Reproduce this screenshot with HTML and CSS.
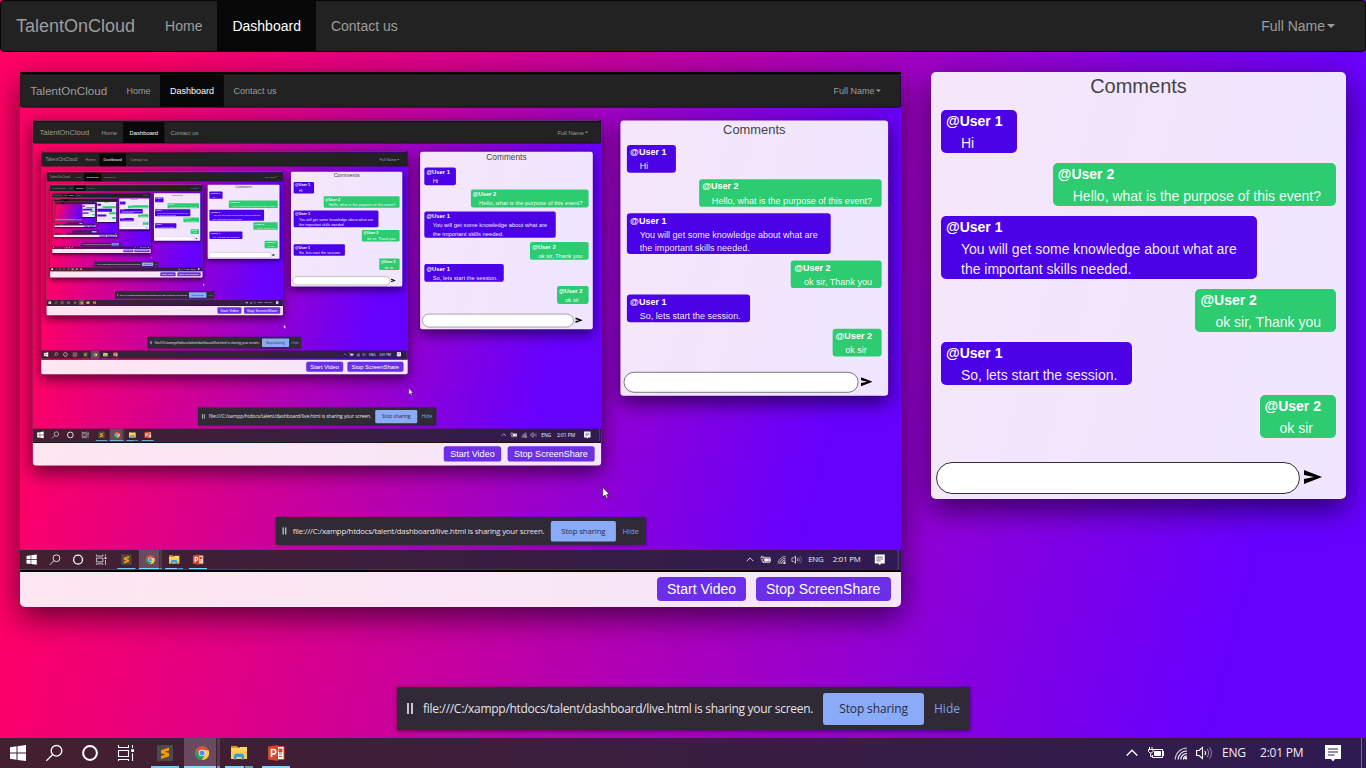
FILE: index.html
```html
<!DOCTYPE html>
<html lang="en">
<head>
<meta charset="utf-8">
<title>TalentOnCloud</title>
<link rel="stylesheet" href="styles.css">
</head>
<body>
<div id="root"></div>

<template id="desktop">
  <div class="desktop">
    <div class="page">
      <nav class="navbar">
        <a class="brand">TalentOnCloud</a>
        <a class="nav-item">Home</a>
        <a class="nav-item active">Dashboard</a>
        <a class="nav-item">Contact us</a>
        <a class="nav-item user">Full Name<span class="caret"></span></a>
      </nav>
      <main class="content">
        <section class="card stage">
          <div class="video"><div class="screen"></div></div>
          <div class="controls">
            <button class="btn">Start Video</button>
            <button class="btn stop">Stop ScreenShare</button>
          </div>
        </section>
        <section class="card chat">
          <h2 class="chat-title">Comments</h2>
          <div class="messages">
            <div class="msg one"><b>@User 1</b><p>Hi</p></div>
            <div class="msg two"><b>@User 2</b><p>Hello, what is the purpose of this event?</p></div>
            <div class="msg one"><b>@User 1</b><p>You will get some knowledge about what are the important skills needed.</p></div>
            <div class="msg two"><b>@User 2</b><p>ok sir, Thank you</p></div>
            <div class="msg one"><b>@User 1</b><p>So, lets start the session.</p></div>
            <div class="msg two"><b>@User 2</b><p>ok sir</p></div>
          </div>
          <div class="composer">
            <div class="field"></div>
            <svg class="send" width="18" height="14" viewBox="0 0 18 14"><path d="M0 0L18 7L0 14V9L10 7L0 5Z" fill="#000"/></svg>
          </div>
        </section>
      </main>
    </div>
    <div class="share">
      <span class="pause"></span>
      <span class="share-text">file:///C:/xampp/htdocs/talent/dashboard/live.html is sharing your screen.</span>
      <span class="share-stop">Stop sharing</span>
      <span class="share-hide">Hide</span>
    </div>
    <svg class="cursor" width="12" height="19" viewBox="0 0 12 19"><path d="M.5 .8V16.2L4.1 12.8L6.6 18.2L9 17.1L6.600 11.900H11.300Z" fill="#fff" stroke="#000"/></svg>
    <footer class="taskbar">
      <svg width="36" height="30"><path d="M10 9.300L16.500 8.300V14.500H10ZM17.500 8.200L26 7V14.500H17.500ZM10 15.500H16.500V21.700L10 20.800ZM17.500 15.500H26V23L17.500 21.900Z" fill="#fff"/></svg>
      <svg width="36" height="30" fill="none" stroke="#fff" stroke-width="1.300"><circle cx="20.500" cy="12.800" r="5.300"/><path d="M16.700 16.500L10.300 22.900"/></svg>
      <svg width="36" height="30"><circle cx="18" cy="15" r="6.900" fill="none" stroke="#fff" stroke-width="2"/></svg>
      <svg width="36" height="30" fill="none" stroke="#fff" stroke-width="1.100"><path d="M10.500 7V9.500H20.500V7M10.500 12.500H20.500V18.500H10.500ZM10.500 23V21.500H20.500V23M24.500 7V10M24.500 15.500V23"/><path d="M23.200 11.200H26V14H23.200Z" fill="#fff" stroke="none"/></svg>
      <svg class="first-app" width="37" height="30"><path d="M4 28H32V30H4Z" fill="#76c8f5"/><rect x="10" y="7" width="16" height="16" rx="1" fill="#4b4b4b"/><path d="M22 9.500L14 12.200V15.300L18.500 16.600L14 18V21L22 18.200V15L17.500 13.700L22 12.400Z" fill="#ff9800"/></svg>
      <svg width="37" height="30"><path d="M0 0H32V30H0Z" fill="#6b4a60"/><path d="M33 0H36V30H33Z" fill="#563a4c"/><path d="M0 28H32V30H0Z" fill="#85d5ff"/><path d="M33 28H36V30H33Z" fill="#5f9fc2"/>
        <circle cx="18" cy="15" r="7" fill="#dd5144"/><path d="M11.900 11.500A7 7 0 0 0 18 22L21 16.800L18 15L15 16.800Z" fill="#1da462"/><path d="M24.600 12.300A7 7 0 0 1 18 22L21.100 16.700L20.500 12.300Z" fill="#ffcd46"/><circle cx="18" cy="15" r="3.300" fill="#fff"/><circle cx="18" cy="15" r="2.600" fill="#4c8bf5"/></svg>
      <svg width="37" height="30"><path d="M4 28H23V30H4Z" fill="#85d5ff"/><path d="M24 28H32V30H24Z" fill="#5f9fc2"/><path d="M10 8H16L18 10H10Z" fill="#d99a10"/><path d="M10 10H18L19 9H26V21H10Z" fill="#ffd766"/><path d="M10 10.500V21H26V13Z" fill="#f8c93c" opacity=".5"/><path d="M12.800 21.500V17.500L14.500 15.500H21.500L23.200 17.500V21.500H20.500V19H15.500V21.500Z" fill="#3b9be0"/></svg>
      <svg width="37" height="30"><path d="M4 28H32V30H4Z" fill="#85d5ff"/><path d="M19 8.500H26V21.500H19Z" fill="#fff" stroke="#d24726" stroke-width="1"/><path d="M10 8.500L20 7V23L10 21.500Z" fill="#d24726"/><path d="M13.500 19V11.500H15.500A2.200 2.200 0 0 1 15.500 16H13.500" fill="none" stroke="#fff" stroke-width="1.700"/><path d="M21 11H24V14H21ZM21 16H24M21 18.500H24" stroke="#d24726" fill="#d24726"/></svg>
      <div class="tray">
        <svg width="12" height="30" fill="none" stroke="#fff" stroke-width="1.300"><path d="M.7 17.500L6 12.200L11.300 17.500"/></svg>
        <svg class="gap10" width="16" height="30" fill="none" stroke="#fff"><path d="M5 11.500H14.500V19.500H4.500V17"/><path d="M14.500 13.500H16V17.500H14.500ZM6.500 13.500H12.500V17.500H6.500Z" fill="#fff"/><path d="M1.500 9V11M4 9V11M.5 11.500H5V13.500L3.500 15H2L.5 13.500ZM2.700 15V18.500H5"/></svg>
        <svg class="gap10" width="14" height="30" fill="none" stroke="#fff" stroke-width="1.200"><path d="M9.500 21.500A3.500 3.500 0 0 1 13 18" /><path d="M6.800 21.500A6 6 0 0 1 13 15.500"/><path d="M4 21.500A9 9 0 0 1 13 12.800" opacity=".9"/><path d="M1.200 21.500A12 12 0 0 1 13 10" opacity=".75"/><circle cx="11.800" cy="20.300" r="1.300" fill="#fff" stroke="none"/></svg>
        <svg class="gap8" width="17" height="30" fill="none" stroke="#fff" stroke-width="1.100"><path d="M.6 12.500H3L6.500 9.500V20.500L3 17.500H.6Z"/><path d="M8.800 13A3 3 0 0 1 8.800 17"/><path d="M11 11A6 6 0 0 1 11 19" opacity=".55"/><path d="M13.400 9.300A9 9 0 0 1 13.400 20.700" opacity=".4"/></svg>
        <span class="lang">ENG</span>
        <span class="clock">2:01 PM</span>
        <svg width="16" height="30"><path d="M0 7H16V21H10L8 23.500L6 21H0Z" fill="#fff"/><path d="M3 11H13M3 14H13M3 17H9.500" stroke="#301c4e"/></svg>
        <span class="edge"></span>
      </div>
    </footer>
  </div>
</template>
<script src="main.js"></script>
</body>
</html>
```
FILE: styles.css
```css
* { box-sizing: border-box; }
body { margin: 0; overflow: hidden; }
#root { width: 1366px; height: 768px; overflow: hidden; }
svg { display: block; flex: none; }

.desktop {
  position: relative;
  width: 1366px;
  height: 768px;
  display: flex;
  flex-direction: column;
  font: 14px/20px "Liberation Sans", Arial, sans-serif;
  transform-origin: 0 0;
}
.page {
  height: 738px;
  background: linear-gradient(105deg, #ff0066 10%, #6600ff 90%);
}

.navbar {
  display: flex;
  height: 52px;
  margin-bottom: 20px;
  background: #222;
  border: 1px solid #080808;
  border-radius: 4px;
  color: #9d9d9d;
}
.brand { padding: 15px; font-size: 18px; }
.nav-item { padding: 15px; }
.nav-item.active { background: #080808; color: #fff; }
.nav-item.user { margin-left: auto; margin-right: 15px; display: flex; align-items: center; }
.caret {
  border-top: 4px solid;
  border-left: 4px solid transparent;
  border-right: 4px solid transparent;
  margin-left: 2px;
}

.content { display: flex; align-items: flex-start; gap: 30px; padding: 0 20px; }
.card {
  background: rgba(255, 255, 255, .9);
  border-radius: 5px;
  box-shadow: 0 10px 30px rgba(0, 0, 0, .6);
}
.stage { width: 881px; height: 535px; }
.video {
  display: flex;
  align-items: center;
  height: 500px;
  background: #000;
}
.screen {
  width: 881px;
  height: 495.31px;
  overflow: hidden;
  background: linear-gradient(105deg, #ff0066 10%, #6600ff 90%);
}
.screen > .desktop { transform: scale(.644949); }
.controls { display: flex; justify-content: flex-end; gap: 10px; padding: 5px 10px; }
.btn {
  height: 24px;
  padding: 0 10px;
  border: 0;
  border-radius: 4px;
  background: #6c2fe9;
  color: #fff;
  font: 14px/24px "Liberation Sans", Arial, sans-serif;
  text-align: left;
}
.btn.stop { width: 135px; }

.chat { width: 415px; height: 427px; display: flex; flex-direction: column; }
.chat-title {
  margin: 0;
  padding-top: 3px;
  height: 38px;
  font-size: 20px;
  line-height: 22px;
  font-weight: 400;
  text-align: center;
  color: #444;
}
.messages { display: flex; flex-direction: column; gap: 10px; padding: 0 10px; }
.msg {
  max-width: 80%;
  padding: 1px 15px 0 5px;
  border-radius: 5px;
  color: rgba(255, 255, 255, .95);
}
.msg b { display: block; height: 22px; color: #fff; }
.msg p { margin: 0 0 0 15px; }
.msg.one { align-self: flex-start; background: #4c02e6; }
.msg.two { align-self: flex-end; background: #2ecc71; }
.composer { display: flex; align-items: center; gap: 4px; margin-top: auto; padding: 0 5px 5px; }
.field { width: 364px; height: 32px; border: 1px solid #333; border-radius: 16px; background: #fff; }
.send { margin-bottom: 3px; }

.share {
  position: absolute;
  left: 397px;
  top: 687px;
  width: 573px;
  height: 43px;
  display: flex;
  align-items: center;
  padding-left: 10px;
  background: #2f2a35;
  box-shadow: 0 1px 4px rgba(0, 0, 0, .5);
  font: 12px/20px "Open Sans", "Noto Sans", sans-serif;
  color: #e6e4e8;
  white-space: nowrap;
}
.pause { width: 6px; height: 11px; border: solid #c9c7cc; border-width: 0 2px; }
.share-text { width: 400px; margin-left: 10px; letter-spacing: -.29px; }
.share-stop {
  width: 101px;
  height: 32px;
  line-height: 31px;
  border-radius: 3px;
  background: #8aabf7;
  color: #2a2a38;
  text-align: center;
  letter-spacing: -.12px;
}
.share-hide { margin-left: 10px; color: #7fa0ee; }

.cursor { display: none; position: absolute; left: 903px; top: 640px; }
.screen .cursor { display: block; }

.taskbar {
  display: flex;
  height: 30px;
  background: linear-gradient(90deg, #43202f, #3a1e40 50%, #2e1b52);
  color: #f1eef5;
}
.first-app { margin-left: 3px; }
.tray {
  display: flex;
  margin-left: auto;
  font: 12px/29px "Open Sans", "Noto Sans", sans-serif;
  letter-spacing: -.2px;
}
.gap10 { margin-left: 10px; }
.gap8 { margin-left: 8px; }
.lang { width: 38px; margin-left: 9px; white-space: nowrap; }
.clock { width: 65px; white-space: nowrap; }
.edge { width: 1px; margin: 0 4px 0 20px; background: #75688c; }
```
FILE: main.js
```js
// The shared screen shows the dashboard itself, so each video holds another desktop.
const DEPTH = 9;
const template = document.getElementById("desktop");
let slot = document.getElementById("root");
for (let i = 0; i < DEPTH; i++) {
  slot.appendChild(template.content.cloneNode(true));
  slot = slot.querySelector(".screen");
}
```
